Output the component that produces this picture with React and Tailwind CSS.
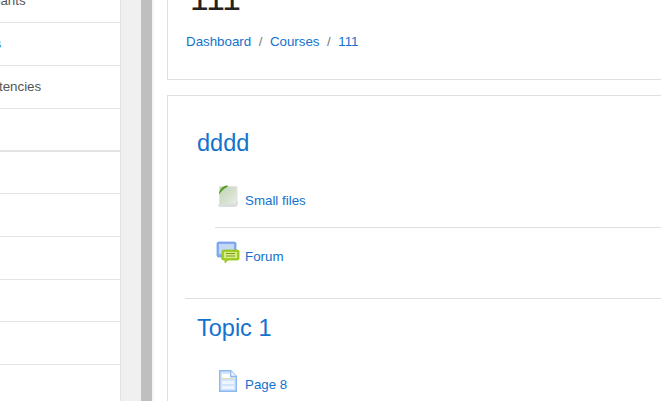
const sidebarRows = [
  { label: "Participants", height: "h-[43px]" },
  { label: "Badges", link: true, height: "h-[43px]" },
  { label: "Competencies", height: "h-[43px]" },
  { label: "", thick: true, height: "h-[43px]" },
  { label: "", height: "h-[42px]" },
  { label: "", height: "h-[43px]" },
  { label: "", height: "h-[43px]" },
  { label: "", height: "h-[42px]" },
  { label: "", height: "h-[43px]" },
];

const FileIcon = () => (
  <svg width="24" height="24" viewBox="0 0 24 24" className="block">
    <defs>
      <linearGradient id="fileFill" x1="0" y1="0" x2="1" y2="1">
        <stop offset="0" stopColor="#bfd5b2" />
        <stop offset="0.6" stopColor="#d8e2d2" />
        <stop offset="1" stopColor="#eceeea" />
      </linearGradient>
    </defs>
    <path d="M3.500 2.500h17.500v16.500l-3 3H3.500z" fill="url(#fileFill)" stroke="#e3e5e2" />
    <path d="M2 20h16.500l3.500-3v3.500l-2 2.500H3z" fill="#dcdedb" />
    <path d="M3 10.500c0-4 3-8.500 8.500-9 1 0 .5 1-.5 1.500-3 1.500-5.500 4-8 7.500z" fill="#4f9a1c" />
  </svg>
);

const ForumIcon = () => (
  <svg width="24" height="24" viewBox="0 0 24 24" className="block">
    <path d="M2 2h17l1 1v13l-1 1H9l-3 3v-3H2l-1-1V3z" fill="#84aaf0" stroke="#76a0ec" strokeWidth="0.8" />
    <rect x="3" y="4" width="15" height="10" fill="#c6d8f8" />
    <path d="M7 10h15l1 1v8l-1 1H12l-3 3v-3H7l-1-1v-8z" fill="#a4cf22" stroke="#93c01c" strokeWidth="0.8" />
    <rect x="8" y="12" width="13" height="6" fill="#d6ec8c" />
    <path d="M10 13.500h9M10 16h9" stroke="#7e9f1a" strokeWidth="1" />
  </svg>
);

const PageIcon = () => (
  <svg width="24" height="24" viewBox="0 0 24 24" className="block">
    <path d="M3.700 2.700h11l5.600 5.600v15h-16.600z" fill="#d2e4fb" stroke="#8db8f0" strokeWidth="1.400" />
    <path d="M14.700 2.700v5.600h5.600" fill="#eef5fe" stroke="#8db8f0" strokeWidth="1.200" />
    <rect x="6" y="6" width="8" height="4" fill="#ffffff" />
    <rect x="6" y="10" width="12" height="1" fill="#e8d9a8" />
    <rect x="6" y="13" width="12" height="3" fill="#eef5fe" />
    <rect x="6" y="18" width="12" height="3" fill="#eef5fe" />
  </svg>
);

const Activity = ({ icon, label }) => (
  <div className="flex items-start gap-[5px] pl-px h-6">
    <div className="w-6 h-6 shrink-0">{icon}</div>
    <a className="text-[13.33px] leading-5 text-[#1272ce] mt-[7px]">{label}</a>
  </div>
);

export default function App() {
  return (
    <div className="h-[401px] w-[661px] overflow-hidden bg-white font-['Liberation_Sans',sans-serif] flex">
      {/* Left nav, clipped by the window */}
      <div className="w-[121px] shrink-0 border-r border-[#e3e3e3] overflow-hidden">
        <div className="-mt-[20px]">
          {sidebarRows.map((row, i) => (
            <div
              key={i}
              className={`box-border ${row.height} flex items-center border-[#e3e3e3] ${
                row.thick ? "border-b-2" : "border-b"
              }`}
            >
              {row.label && (
                <span
                  className={`-ml-[44px] whitespace-nowrap text-[13.33px] ${
                    row.link ? "text-[#1272ce]" : "text-[#555555]"
                  }`}
                >
                  {row.label}
                </span>
              )}
            </div>
          ))}
        </div>
      </div>

      <div className="w-5 shrink-0 bg-[#f0f0f0]" />
      <div className="w-[11px] shrink-0 bg-[#bfbfbf]" />
      <div className="w-[2px] shrink-0 bg-[#f5f5f5]" />
      <div className="w-[13px] shrink-0 bg-white" />

      {/* Main column */}
      <div className="w-[520px] shrink-0">
        <div className="box-border h-[80px] overflow-hidden border-l border-b border-[#dfdfdf] pl-[18px]">
          <h1 className="text-[33.5px] leading-[36px] text-[#222222] -mt-[19px] pl-[4px]">111</h1>
          <div className="flex gap-[7.5px] mt-[15px] text-[13.33px] leading-5 text-[#1272ce]">
            <a>Dashboard</a>
            <span className="text-[#777777]">/</span>
            <a>Courses</a>
            <span className="text-[#777777]">/</span>
            <a>111</a>
          </div>
        </div>

        <div className="mt-[15px] border-l border-t border-[#dfdfdf] h-[320px] pl-[17px]">
          <section className="box-border h-[203px] border-b border-[#dfdfdf]">
            <h3 className="pl-3 pt-[33px] text-[23.5px] leading-7 text-[#1272ce]">dddd</h3>
            <div className="ml-[30px] mt-[27px] pb-[19px] border-b border-[#dfdfdf]">
              <Activity icon={<FileIcon />} label="Small files" />
            </div>
            <div className="ml-[30px] mt-[12px]">
              <Activity icon={<ForumIcon />} label="Forum" />
            </div>
          </section>
          <section>
            <h3 className="pl-3 pt-[15px] text-[23.5px] leading-7 text-[#1272ce]">Topic 1</h3>
            <div className="ml-[30px] mt-[26px]">
              <Activity icon={<PageIcon />} label="Page 8" />
            </div>
          </section>
        </div>
      </div>
    </div>
  );
}
